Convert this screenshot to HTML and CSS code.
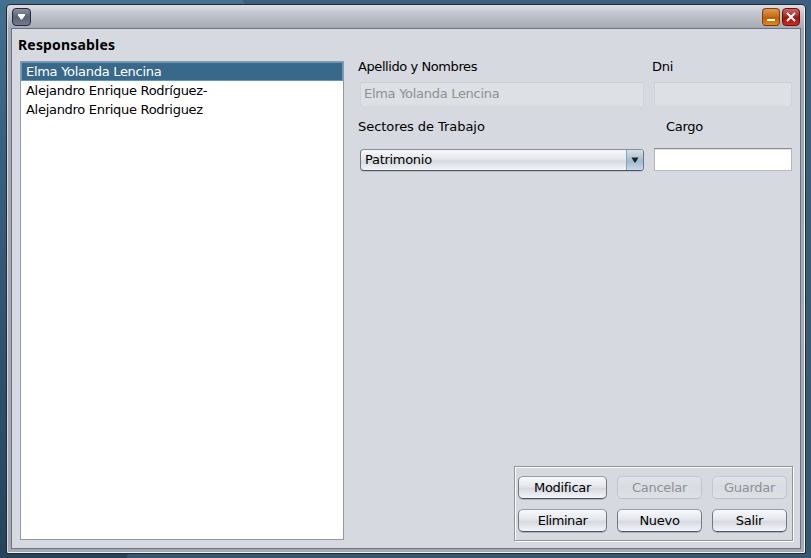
FILE: index.html
```html
<!DOCTYPE html>
<html lang="es">
<head>
<meta charset="utf-8">
<title>Responsables</title>
<link rel="stylesheet" href="styles.css">
</head>
<body>
<main class="window">
  <header class="titlebar">
    <button class="winbtn menu" aria-label="Menu"><svg width="19" height="18" viewBox="0 0 19 18"><path d="M6 6h7v1.5L10 11.5H9L6 7.5z" fill="#fff"/></svg></button>
    <div class="controls">
      <button class="winbtn minimize" aria-label="Minimizar"><svg width="18" height="18" viewBox="0 0 18 18"><path d="M5 11h8v2H5z" fill="#fff"/></svg></button>
      <button class="winbtn close" aria-label="Cerrar"><svg width="18" height="18" viewBox="0 0 18 18"><path d="M5 5l8 8M13 5l-8 8" stroke="#fff" stroke-width="2"/></svg></button>
    </div>
  </header>
  <div class="content">
    <section class="people">
      <h1>Responsables</h1>
      <ul class="list">
        <li class="selected">Elma Yolanda Lencina</li>
        <li>Alejandro Enrique Rodríguez-</li>
        <li>Alejandro Enrique Rodriguez</li>
      </ul>
    </section>
    <section class="detail">
      <div class="form">
        <label class="name-label">Apellido y Nombres</label>
        <label class="dni-label">Dni</label>
        <div class="field disabled">Elma Yolanda Lencina</div>
        <div class="field disabled"></div>
        <label class="sector-label">Sectores de Trabajo</label>
        <label class="cargo-label">Cargo</label>
        <div class="combo"><span>Patrimonio</span><i class="arrow"><svg width="16" height="20" viewBox="0 0 16 20"><path d="M4.5 7.5h7L8.5 12.5h-1z" fill="#1c2025"/></svg></i></div>
        <div class="field editable"></div>
      </div>
      <div class="actions">
        <button class="btn">Modificar</button>
        <button class="btn" disabled>Cancelar</button>
        <button class="btn" disabled>Guardar</button>
        <button class="btn tight">Eliminar</button>
        <button class="btn">Nuevo</button>
        <button class="btn">Salir</button>
      </div>
    </section>
  </div>
</main>
</body>
</html>
```

FILE: styles.css
```css
* { box-sizing: border-box; }
html, body { height: 100%; margin: 0; }
body {
  padding: 4px 5px 4px 6px;
  background:
    linear-gradient(115deg, transparent 116px, #345872 117px) 0 100% / 100% 4px no-repeat,
    linear-gradient(65deg, #46708f 221px, #3c5f7f 222px) 0 0 / 100% 4px no-repeat,
    linear-gradient(#3c6180, #35566f) 100% 0 / 5px 100% no-repeat,
    linear-gradient(#44708f 0, #3b6080 25%, #2d5069 70%, #264459 100%);
  font: 13px/19px "DejaVu Sans", sans-serif;
  letter-spacing: -0.29px;
  color: #000;
  overflow: hidden;
}
button { font: inherit; letter-spacing: inherit; color: inherit; padding: 0; margin: 0; }
.window {
  height: 550px;
  display: flex;
  flex-direction: column;
  padding: 0 4px 4px;
  border: 1px solid #24292f;
  border-radius: 4px 4px 2px 2px;
  background: linear-gradient(#dcdee3 0, #c3c7cf 8px, #a5a9b3 23px, #a4a9b4 100%);
  box-shadow: inset 1px 0 #d6d8dd, inset -1px -1px #f1f2f4;
}
.titlebar {
  height: 23px;
  flex: none;
  display: flex;
  justify-content: space-between;
  padding: 3px 1px 0 1px;
}
.controls { display: flex; gap: 2px; }
.winbtn { display: block; width: 18px; height: 18px; border: 1px solid; border-radius: 4px; }
.winbtn svg { display: block; margin: -1px; }
.menu {
  width: 19px;
  border-color: #252b3a;
  background: linear-gradient(#8990a0, #596174 50%, #737b8c);
}
.minimize {
  border-color: #8d3c12 #8d3c12 #813600;
  background: linear-gradient(#d99a5b, #c86e15 45%, #bd5e00 55%, #e08b20);
}
.close {
  border-color: #6c1010;
  background: linear-gradient(#c86862, #a92a20 45%, #9d1409 55%, #c92c22);
}
.content {
  flex: 1;
  display: grid;
  grid-template-columns: 332px 1fr;
  border: 1px solid #6b7382;
  background: #d6d9e0;
  min-height: 0;
}
.people { display: flex; flex-direction: column; padding: 6px 0 8px 8px; min-height: 0; }
h1 {
  margin: 0 0 6px -2px;
  font: bold 14px/20px "Noto Sans", sans-serif;
  letter-spacing: 0.17px;
}
.list {
  flex: 1;
  margin: 0;
  padding: 0;
  list-style: none;
  border: 1px solid #9297a1;
  background: #fff;
}
.list li { height: 19px; padding-left: 5px; line-height: 19px; }
.list .selected {
  border: 1px solid #6098c5;
  padding-left: 4px;
  line-height: 17px;
  color: #fff;
  background: #39698a;
}
.detail { display: flex; flex-direction: column; justify-content: space-between; padding: 28px 7px 7px 14px; }
.form {
  display: grid;
  grid-template-columns: 284px 138px;
  column-gap: 10px;
  grid-template-rows: 25px 37px 29px 23px;
  margin-left: 2px;
}
.name-label, .sector-label, .dni-label { margin-left: -2px; }
.name-label { letter-spacing: -0.42px; }
.sector-label { letter-spacing: -0.06px; }
.cargo-label { margin-left: 12px; }
.sector-label, .cargo-label { margin-top: -2px; }
.field { height: 24px; padding: 0 3px; line-height: 22px; border: 1px solid #cdd0d4; }
.disabled { color: #8e9197; background: #dde0e4; border-color: #cbced4 #cfd2d7 #dadde2; }
.editable { height: 23px; background: #fff; border-color: #8a8c90 #b5b6b9 #b9babd; box-shadow: inset 0 1px #e0e0e1; }
.combo {
  height: 22px;
  display: flex;
  margin-top: 1px;
  border: 1px solid;
  border-color: #898e96 #70757e #4f555e;
  border-radius: 4px;
  line-height: 20px;
  background: linear-gradient(#f7f8fa, #e3e5ea 48%, #d6d9e0 55%, #f3f5f8);
  box-shadow: 0 1px #bcc0c7;
  overflow: hidden;
}
.combo span { flex: 1; padding-left: 4px; }
.arrow { width: 17px; border-left: 1px solid #8ba2b8; background: linear-gradient(#d5e0eb, #a7bed2 50%, #a0b9ce 55%, #c4dbee); }
.arrow svg { display: block; }
.actions {
  align-self: flex-end;
  width: 279px;
  height: 75px;
  display: grid;
  grid-template-columns: 89px 85px 75px;
  grid-auto-rows: 23px;
  gap: 10px;
  padding: 9px 3px;
  border: 1px solid #92959b;
  box-shadow: inset 1px 1px #fff, 1px 1px #fff;
}
.btn {
  border: 1px solid;
  border-color: #989ca3 #747981 #4e535b;
  border-radius: 5px;
  line-height: 21px;
  background: linear-gradient(#f8f9fb, #e4e6eb 47%, #d6d9e0 55%, #f3f5f9);
  box-shadow: 0 1px #aeb2ba;
}
.tight { letter-spacing: -0.45px; }
.btn:disabled {
  color: #8e9197;
  border-color: #c7cad0 #c3c6cc #b9bdc5;
  background: linear-gradient(#dfe2e6, #d9dce2 50%, #dde0e5);
  box-shadow: none;
}
```
